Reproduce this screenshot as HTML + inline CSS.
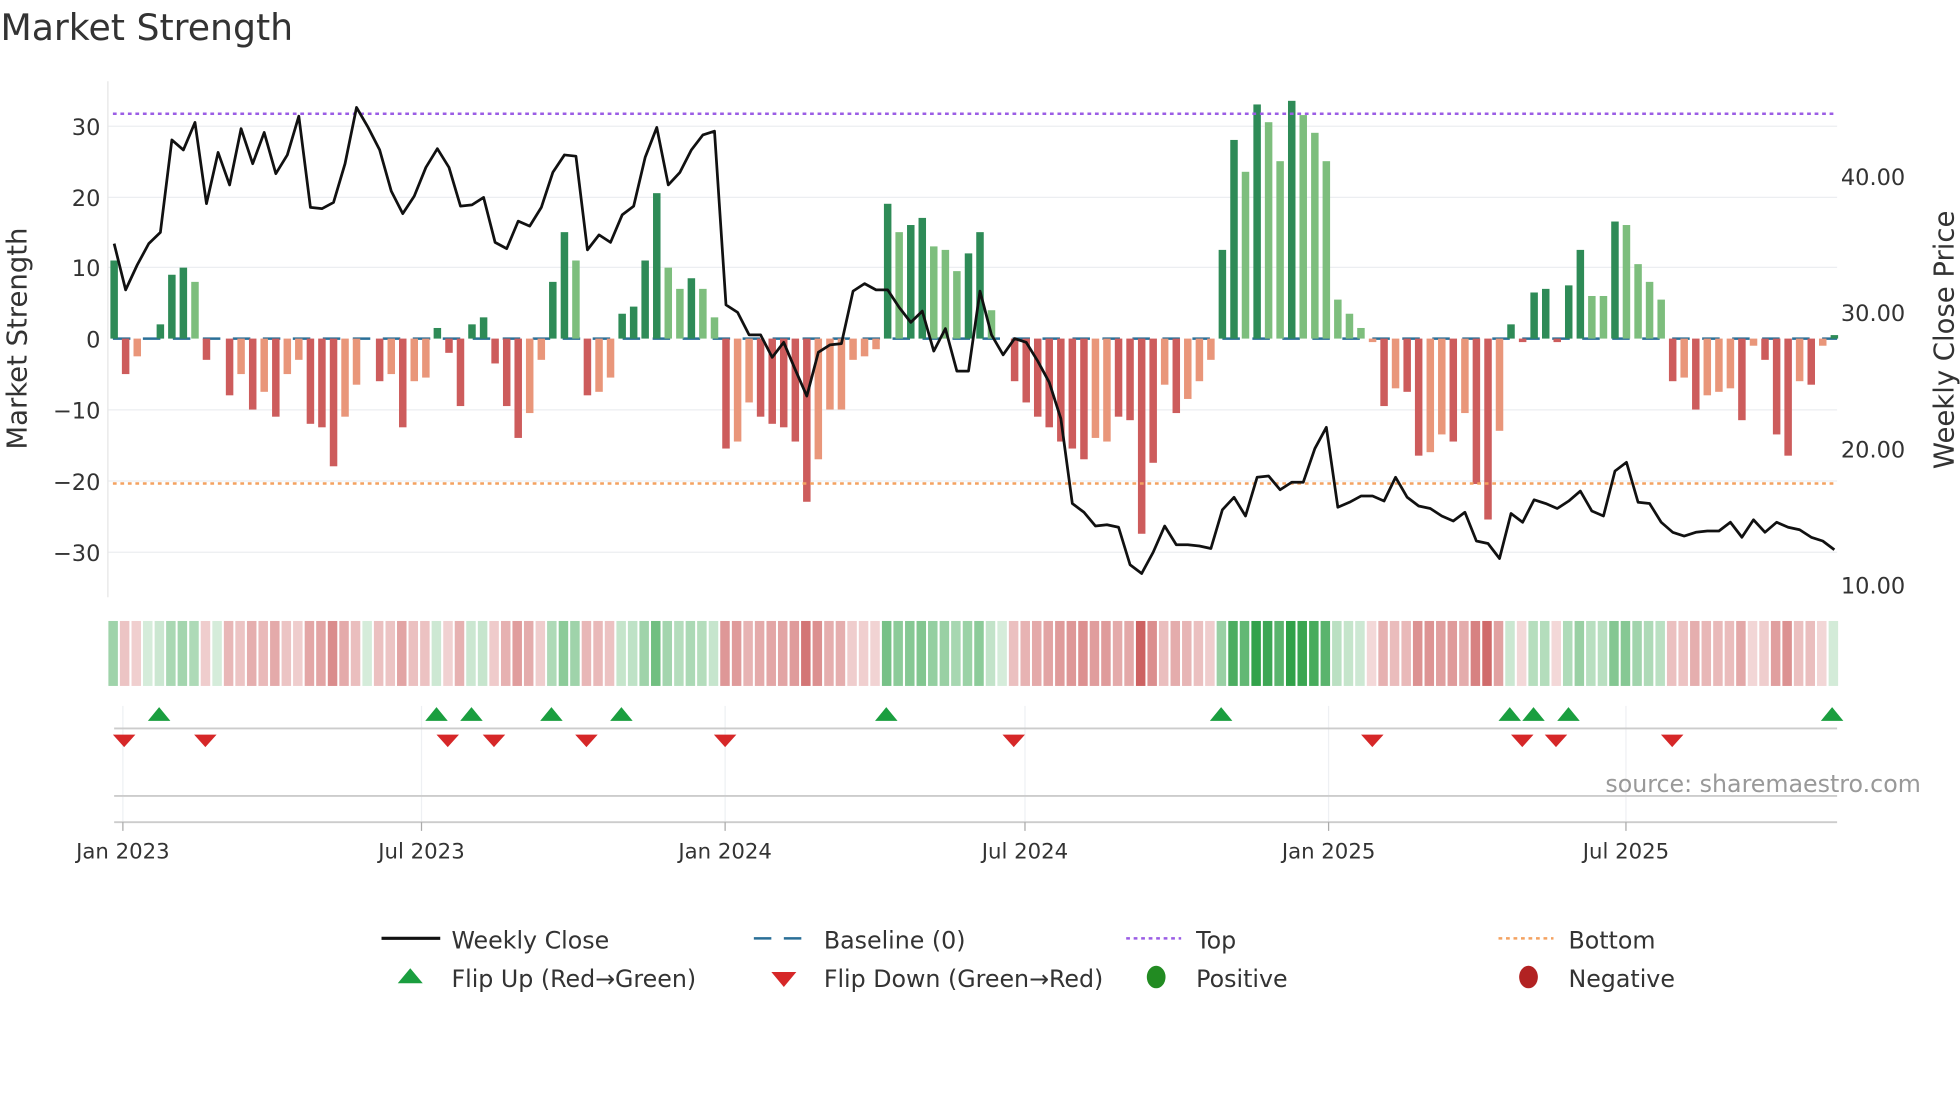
<!DOCTYPE html>
<html><head><meta charset="utf-8">
<style>
html,body{margin:0;padding:0;background:#fff;}
svg{display:block;font-family:"DejaVu Sans","Liberation Sans",sans-serif;}
</style></head>
<body>
<svg id="s" width="1960" height="1102" viewBox="0 0 1568 882" xmlns="http://www.w3.org/2000/svg">
<rect width="1568" height="882" fill="#fff"/>
<text x="0" y="32" font-size="29" fill="#333">Market Strength</text>
<g stroke="#eceef1" stroke-width="1">
<line x1="86" x2="1470" y1="101" y2="101"/><line x1="86" x2="1470" y1="158" y2="158"/>
<line x1="86" x2="1470" y1="214" y2="214"/><line x1="86" x2="1470" y1="328" y2="328"/>
<line x1="86" x2="1470" y1="385" y2="385"/><line x1="86" x2="1470" y1="442" y2="442"/>
</g>
<line x1="86" x2="86" y1="65" y2="478" stroke="#e6e6e6"/>
<g font-size="18" fill="#333" text-anchor="end">
<text x="80" y="108">30</text><text x="80" y="165">20</text><text x="80" y="221">10</text>
<text x="80" y="278">0</text><text x="80" y="335">−10</text><text x="80" y="392">−20</text><text x="80" y="449">−30</text>
</g>
<g font-size="18" fill="#333">
<text x="1473" y="148">40.00</text><text x="1473" y="257">30.00</text><text x="1473" y="366">20.00</text><text x="1473" y="475">10.00</text>
</g>
<text transform="translate(21,271) rotate(-90)" font-size="22" fill="#333" text-anchor="middle">Market Strength</text>
<text transform="translate(1563,272) rotate(-90)" font-size="22" fill="#333" text-anchor="middle">Weekly Close Price</text>
<line x1="90" x2="1470" y1="271" y2="271" stroke="#2a6f97" stroke-width="2" stroke-dasharray="14,10"/>
<g id="bars"></g>
<line x1="90" x2="1470" y1="91" y2="91" stroke="#9b5de5" stroke-width="2" stroke-dasharray="3,3"/>
<line x1="90" x2="1470" y1="387" y2="387" stroke="#f4a261" stroke-width="2" stroke-dasharray="3,3"/>
<polyline id="price" fill="none" stroke="#111" stroke-width="2.2" stroke-linejoin="round"/>
<g id="heat"></g>
<g stroke="#eef0f3">
<line x1="98" x2="98" y1="565" y2="658"/><line x1="337" x2="337" y1="565" y2="658"/>
<line x1="580" x2="580" y1="565" y2="658"/><line x1="820" x2="820" y1="565" y2="658"/>
<line x1="1063" x2="1063" y1="565" y2="658"/><line x1="1301" x2="1301" y1="565" y2="658"/>
</g>
<line x1="91" x2="1470" y1="583" y2="583" stroke="#ccc" stroke-width="1.5"/>
<line x1="91" x2="1470" y1="637" y2="637" stroke="#ccc" stroke-width="1.5"/>
<line x1="91" x2="1470" y1="658" y2="658" stroke="#ccc" stroke-width="1.5"/>
<g stroke="#aaa"><line x1="98" x2="98" y1="658" y2="665"/><line x1="337" x2="337" y1="658" y2="665"/><line x1="580" x2="580" y1="658" y2="665"/><line x1="820" x2="820" y1="658" y2="665"/><line x1="1063" x2="1063" y1="658" y2="665"/><line x1="1301" x2="1301" y1="658" y2="665"/></g>
<g id="flips"></g>
<text x="1537" y="634" font-size="19" fill="#999" text-anchor="end">source: sharemaestro.com</text>
<g font-size="17" fill="#333" text-anchor="middle">
<text x="98" y="687">Jan 2023</text><text x="337" y="687">Jul 2023</text><text x="580" y="687">Jan 2024</text>
<text x="820" y="687">Jul 2024</text><text x="1063" y="687">Jan 2025</text><text x="1301" y="687">Jul 2025</text>
</g>
<g font-size="19" fill="#333">
<line x1="305" x2="352" y1="751" y2="751" stroke="#111" stroke-width="2.5"/><text x="361" y="759">Weekly Close</text>
<line x1="603" x2="647" y1="751" y2="751" stroke="#2a6f97" stroke-width="2" stroke-dasharray="14,10"/><text x="659" y="759">Baseline (0)</text>
<line x1="901" x2="945" y1="751" y2="751" stroke="#9b5de5" stroke-width="2" stroke-dasharray="3,3"/><text x="957" y="759">Top</text>
<line x1="1199" x2="1243" y1="751" y2="751" stroke="#f4a261" stroke-width="2" stroke-dasharray="3,3"/><text x="1255" y="759">Bottom</text>
<polygon points="318,787 328,775 338,787" fill="#1a9e3f"/><text x="361" y="790">Flip Up (Red→Green)</text>
<polygon points="617,778 637,778 627,790" fill="#d62728"/><text x="659" y="790">Flip Down (Green→Red)</text>
<ellipse cx="925" cy="782" rx="7.5" ry="9" fill="#228b22"/><text x="957" y="790">Positive</text>
<ellipse cx="1223" cy="782" rx="7.5" ry="9" fill="#b22222"/><text x="1255" y="790">Negative</text>
</g>
</svg>
<script>
var V=[[11,'d'],[-5,'r'],[-2.5,'s'],[0,'d'],[2,'d'],[9,'d'],[10,'d'],[8,'l'],[-3,'r'],[0,'r'],[-8,'r'],[-5,'s'],[-10,'r'],[-7.5,'s'],[-11,'r'],[-5,'s'],[-3,'s'],[-12,'r'],[-12.5,'r'],[-18,'r'],[-11,'s'],[-6.5,'s'],[0,'s'],[-6,'r'],[-5,'s'],[-12.5,'r'],[-6,'s'],[-5.5,'s'],[1.5,'d'],[-2,'r'],[-9.5,'r'],[2,'d'],[3,'d'],[-3.5,'r'],[-9.5,'r'],[-14,'r'],[-10.5,'s'],[-3,'s'],[8,'d'],[15,'d'],[11,'l'],[-8,'r'],[-7.5,'s'],[-5.5,'s'],[3.5,'d'],[4.5,'d'],[11,'d'],[20.5,'d'],[10,'l'],[7,'l'],[8.5,'d'],[7,'l'],[3,'l'],[-15.5,'r'],[-14.5,'s'],[-9,'s'],[-11,'r'],[-12,'r'],[-12.5,'r'],[-14.5,'r'],[-23,'r'],[-17,'s'],[-10,'s'],[-10,'s'],[-3,'s'],[-2.5,'s'],[-1.5,'s'],[19,'d'],[15,'l'],[16,'d'],[17,'d'],[13,'l'],[12.5,'l'],[9.5,'l'],[12,'d'],[15,'d'],[4,'l'],[0,'l'],[-6,'r'],[-9,'r'],[-11,'r'],[-12.5,'r'],[-14.5,'r'],[-15.5,'r'],[-17,'r'],[-14,'s'],[-14.5,'s'],[-11,'r'],[-11.5,'r'],[-27.5,'r'],[-17.5,'r'],[-6.5,'s'],[-10.5,'r'],[-8.5,'s'],[-6,'s'],[-3,'s'],[12.5,'d'],[28,'d'],[23.5,'l'],[33,'d'],[30.5,'l'],[25,'l'],[33.5,'d'],[31.5,'l'],[29,'l'],[25,'l'],[5.5,'l'],[3.5,'l'],[1.5,'l'],[-0.5,'s'],[-9.5,'r'],[-7,'s'],[-7.5,'r'],[-16.5,'r'],[-16,'s'],[-13.5,'s'],[-14.5,'r'],[-10.5,'s'],[-20.5,'r'],[-25.5,'r'],[-13,'s'],[2,'d'],[-0.5,'r'],[6.5,'d'],[7,'d'],[-0.5,'r'],[7.5,'d'],[12.5,'d'],[6,'l'],[6,'l'],[16.5,'d'],[16,'l'],[10.5,'l'],[8,'l'],[5.5,'l'],[-6,'r'],[-5.5,'s'],[-10,'r'],[-8,'s'],[-7.5,'s'],[-7,'s'],[-11.5,'r'],[-1,'s'],[-3,'r'],[-13.5,'r'],[-16.5,'r'],[-6,'s'],[-6.5,'r'],[-1,'s'],[0.5,'d']];
var C={d:'#2e8b57',l:'#7dbe7d',r:'#cd5c5c',s:'#e9967a'};
var b='',h='';
for(var i=0;i<V.length;i++){var x=91+9.24*i,v=V[i][0];
 if(v!=0){var y0=271-5.68*Math.max(v,0),hh=Math.abs(v)*5.68;b+='<rect x="'+(x-3).toFixed(1)+'" y="'+y0.toFixed(1)+'" width="6" height="'+hh.toFixed(1)+'" fill="'+C[V[i][1]]+'"/>';}
 var a=Math.min(1,0.2+Math.abs(v)/34*0.8),col=v>=0?'rgba(46,160,70,'+a.toFixed(2)+')':'rgba(196,70,70,'+a.toFixed(2)+')';
 h+='<rect x="'+(x-4.6).toFixed(1)+'" y="497" width="7.6" height="52" fill="'+col+'"/>';}
document.getElementById('bars').innerHTML=b;document.getElementById('heat').innerHTML=h;
var P=[195,232,212,195,186,112,120,98,163,122,148,103,131,106,139,124,93,166,167,162,131,86,102,120,153,171,157,134,119,134,165,164,158,194,199,177,181,166,138,124,125,200,188,194,172,165,126,102,148,138,120,108,105,244,250,268,268,286,274,296,317,282,276,275,233,227,232,232,246,258,249,281,263,297,297,233,268,284,271,274,289,306,335,403,410,421,420,422,452,459,442,421,436,436,437,439,408,398,413,382,381,392,386,386,359,342,406,402,397,397,401,382,398,405,407,413,417,410,433,435,447,411,418,400,403,407,401,393,409,413,377,370,402,403,418,426,429,426,425,425,418,430,416,426,418,422,424,430,433,440];
var pts=[];for(var i=0;i<P.length;i++)pts.push((91+9.24*i).toFixed(1)+','+P[i]);
document.getElementById('price').setAttribute('points',pts.join(' '));
var up=[127,349,377,441,497,709,977,1208,1227,1255,1466],dn=[99,164,358,395,469,580,811,1098,1218,1245,1338],f='';
up.forEach(function(x){f+='<polygon points="'+(x-9)+',577 '+x+',566 '+(x+9)+',577" fill="#1a9e3f"/>';});
dn.forEach(function(x){f+='<polygon points="'+(x-9)+',588 '+(x+9)+',588 '+x+',598" fill="#d62728"/>';});
document.getElementById('flips').innerHTML=f;
</script>
</body></html>
